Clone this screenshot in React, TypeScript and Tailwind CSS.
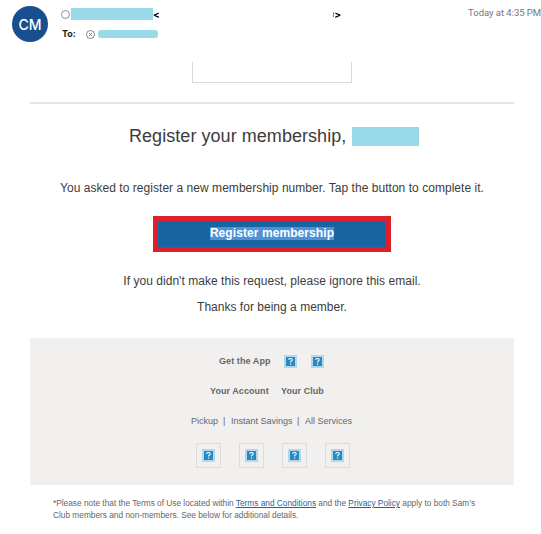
function Missing() {
  return (
    <svg className="h-[13px] w-[13px] shrink-0" viewBox="0 0 13 13" aria-hidden="true">
      <rect width="13" height="13" fill="#b4d7f0" />
      <rect x="2" y="2" width="9" height="9" fill="#288bc0" />
      <path d="M4.9 5.1V4.2L5.7 3.5H7.3L8.1 4.2V5.4L6.6 6.6V7.5M6.6 8.6V9.7" fill="none" stroke="#eef8ff" strokeWidth="1.1" />
    </svg>
  );
}

function Header() {
  return (
    <header className="flex h-[62px] items-start pl-3 [font-family:Inter,Roboto,sans-serif]">
      <div className="mt-1.5 flex h-[36px] w-[36px] items-center justify-center rounded-full bg-[#174f90] pt-px text-[14px] font-medium text-white">
        CM
      </div>
      <div className="ml-[13px] mt-[7px] w-[280px]">
        <div className="flex h-[14px] items-center text-[10px] font-bold leading-[14px] text-black">
          <span className="h-[9px] w-[9px] rounded-full border border-[#8d8d99]" />
          <span className="ml-px h-[12px] w-[82px] bg-[#99d8e6]" />
          <span>&lt;</span>
          <span className="ml-auto h-[5px] w-px bg-[#888]" />
          <span>&gt;</span>
        </div>
        <div className="mt-[6px] flex h-[14px] items-center text-[9px] font-bold leading-[14px] text-[#222]">
          <span className="w-[25px] pl-px">To:</span>
          <svg className="h-[9px] w-[9px]" viewBox="0 0 9 9" fill="none" stroke="#77777c" strokeWidth="0.9">
            <circle cx="4.5" cy="4.5" r="4" />
            <path d="m3 3 3 3m0-3L3 6" />
          </svg>
          <span className="ml-[3px] h-[8px] w-[60px] rounded-[3px] bg-[#99d8e6]" />
        </div>
      </div>
      <time className="ml-auto mt-[6px] whitespace-nowrap text-[9.5px] leading-[13px] tracking-[-0.04px] text-[#77777a] [font-family:Roboto,sans-serif]">
        Today at 4:35 PM
      </time>
    </header>
  );
}

export default function App() {
  return (
    <div className="h-[534px] w-[541px] overflow-hidden bg-white font-['Liberation_Sans',Arial,sans-serif] text-[#3c3c3c]">
      <Header />
      <main className="ml-[30px] w-[484px] whitespace-nowrap">
        <div className="ml-[162px] h-[21px] w-[160px] border-x border-b border-[#d9d9d9]" />
        <div className="mt-[19px] h-[2px] bg-[#e5e5e5]" />
        <h1 className="mt-[20px] flex h-[24px] items-center pl-[99px] text-[18px] leading-[24px] tracking-[0.05px]">
          <span className="w-[223px]">Register your membership,</span>
          <span className="h-[19px] w-[67px] bg-[#99d8e6]" />
        </h1>
        <p className="mt-[30px] pl-[30px] text-[12px] leading-[20px] tracking-[0.04px]">
          You asked to register a new membership number. Tap the button to complete it.
        </p>
        <button className="ml-[123px] mt-[18px] flex h-[36px] w-[238px] items-center justify-center border-[5px] border-[#df202b] bg-[#1766a3] pb-[2px] text-[12px] font-bold leading-[13px] tracking-[0.08px] text-white">
          <span className="bg-[#4d91d6]">Register membership</span>
        </button>
        <p className="mt-[19px] text-center text-[12px] leading-[20px] tracking-[0.04px]">
          If you didn't make this request, please ignore this email.
        </p>
        <p className="mt-[6px] text-center text-[12px] leading-[20px] tracking-[0.02px]">Thanks for being a member.</p>
        <footer className="mt-[21px] h-[147px] bg-[#f2f0ef] pt-[16px] text-[9px] leading-[14px] text-[#666]">
          <div className="flex h-[14px] items-center pl-[189px] font-bold tracking-[0.08px]">
            <span className="w-[65px]">Get the App</span>
            <Missing />
            <span className="w-[14px]" />
            <Missing />
          </div>
          <div className="mt-[16px] flex h-[14px] pl-[180px] font-bold tracking-[0.06px]">
            <span className="w-[71px]">Your Account</span>
            <span>Your Club</span>
          </div>
          <div className="mt-[16px] flex h-[14px] pl-[161px]">
            <span className="w-[32px]">Pickup</span>
            <span className="w-[8px]">|</span>
            <span className="w-[66px]">Instant Savings</span>
            <span className="w-[8px]">|</span>
            <span>All Services</span>
          </div>
          <div className="mt-[15px] flex gap-[18px] pl-[166px]">
            {[0, 1, 2, 3].map((slot) => (
              <span key={slot} className="flex h-[25px] w-[25px] items-center justify-center border border-[#dddcdc]">
                <Missing />
              </span>
            ))}
          </div>
        </footer>
        <p className="mt-[12px] pl-[23px] text-[8.3px] leading-[12px] text-[#666]">
          *Please note that the Terms of Use located within <a className="text-[#1766a3] underline">Terms and Conditions</a> and the{" "}
          <a className="text-[#1766a3] underline">Privacy Policy</a> apply to both Sam’s
          <br />
          Club members and non-members. See below for additional details.
        </p>
      </main>
    </div>
  );
}
